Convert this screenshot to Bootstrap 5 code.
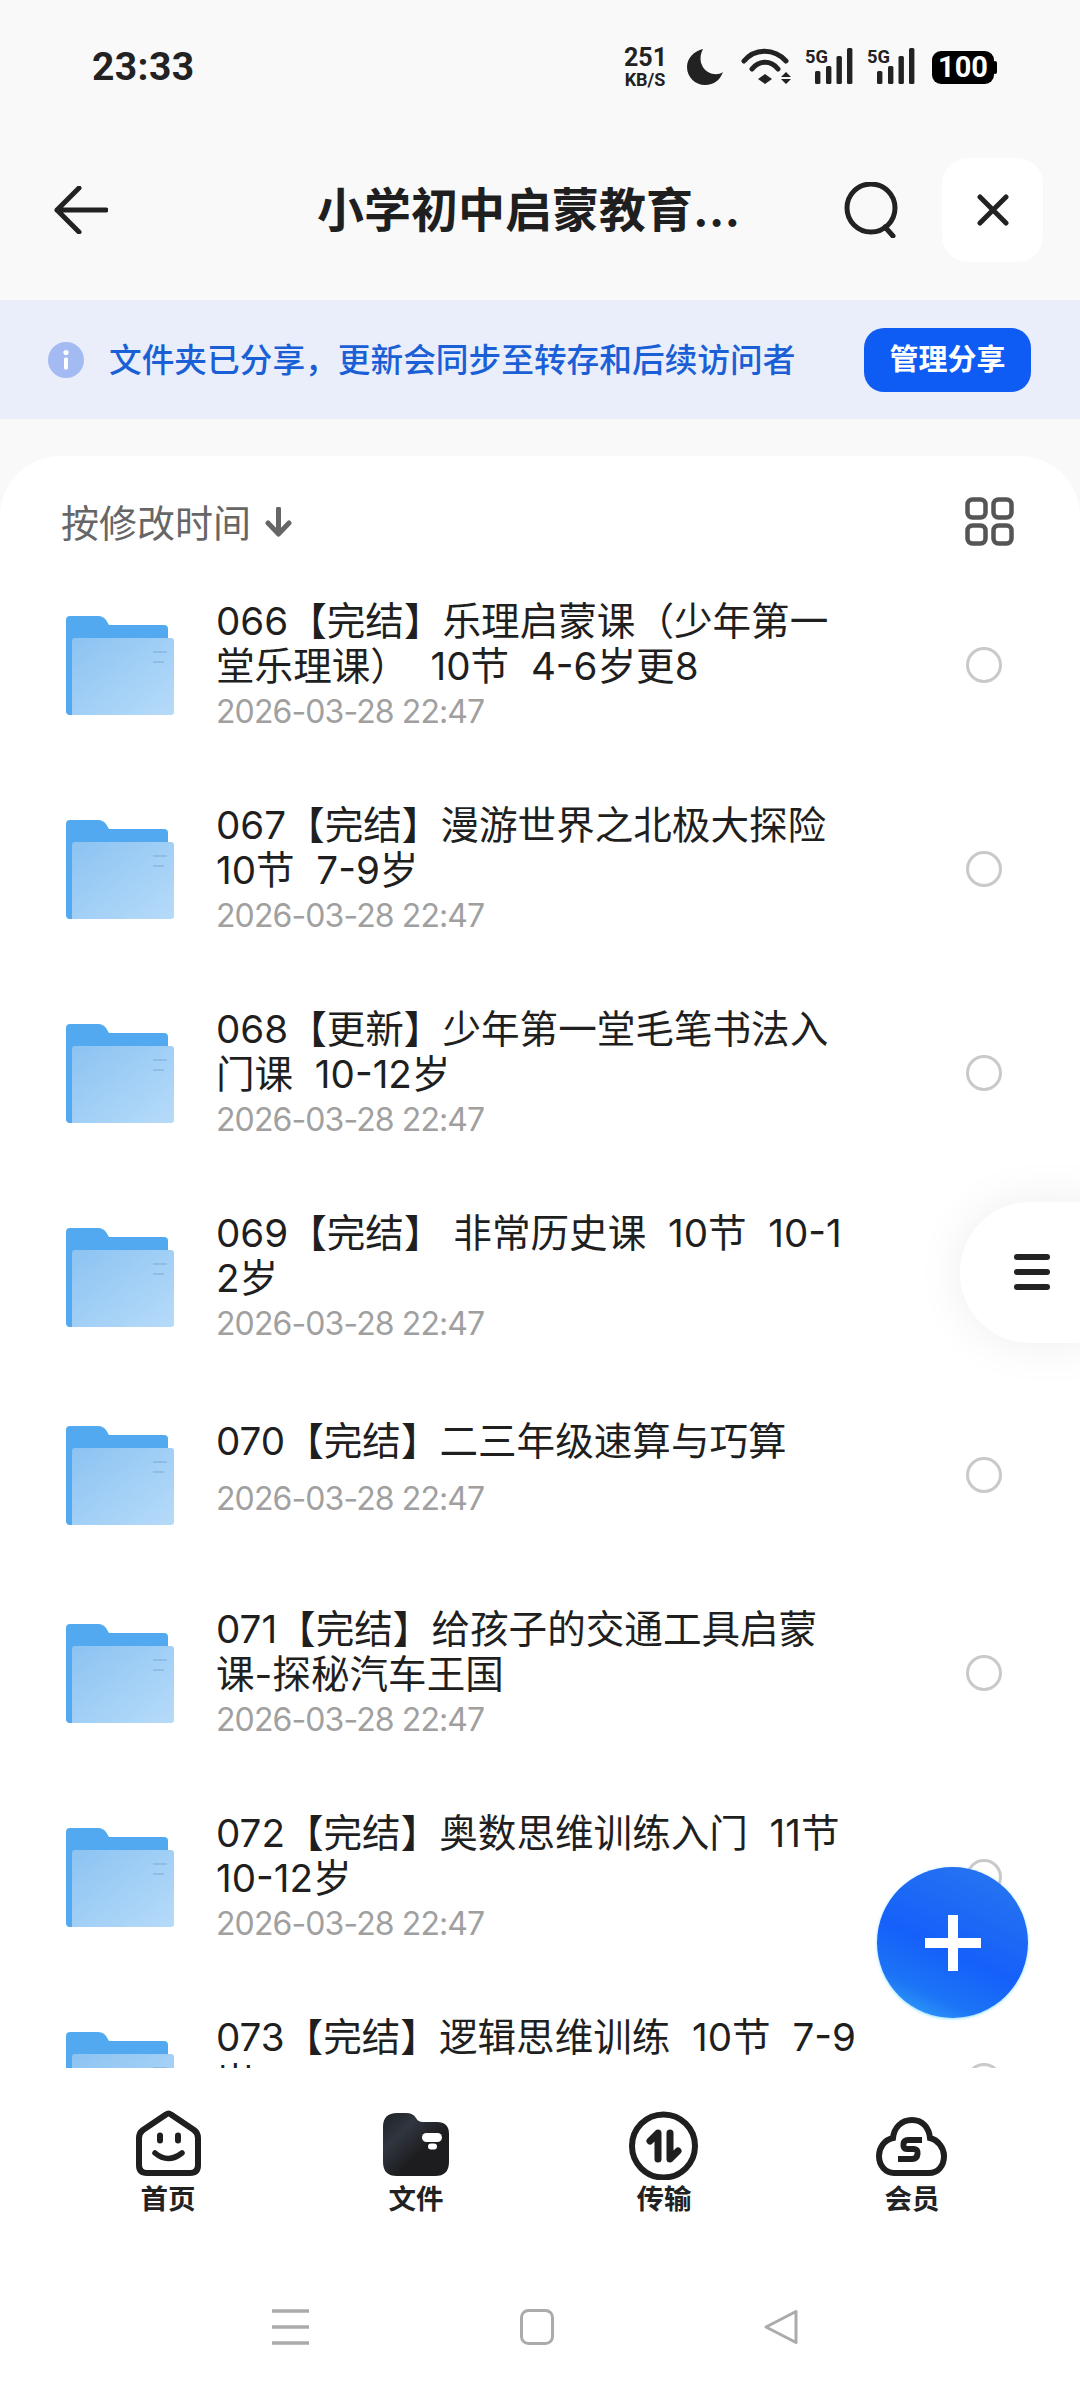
<!DOCTYPE html>
<html lang="zh">
<head>
  <meta charset="UTF-8" />
  <meta name="viewport" content="width=device-width, initial-scale=1.0"/>
  <title>小学初中启蒙教育</title>
  <link href="https://cdn.jsdelivr.net/npm/bootstrap@5.3.0/dist/css/bootstrap.min.css" rel="stylesheet" />
  <style>
    html, body { margin: 0; background: #f9f9f9; }
    body { font-family: Inter, "Noto Sans CJK SC", sans-serif; color: #1f1f1f; }
    .phone { width: 1080px; height: 2392px; overflow: hidden; position: relative; }

    .status-bar { height: 120px; padding: 48px 83px 0 92px; }
    .clock { font-family: Roboto, sans-serif; font-size: 39px; font-weight: 700; line-height: 37px; margin-top: 1px; color: #222; letter-spacing: .4px; }
    .speed { width: 43px; color: #222; font-family: Roboto, sans-serif; font-weight: 700; text-align: center; }
    .speed-num { font-size: 25px; line-height: 20px; }
    .speed-unit { font-size: 18px; line-height: 17px; margin-top: 3px; margin-left: -1px; white-space: nowrap; }
    .moon-icon { margin-left: 19px; }
    .wifi-icon { margin-left: 18px; }
    .signal { width: 48px; height: 37px; margin-left: 14px; }
    .battery { width: 65px; height: 33px; margin: 3px 0 0 17px; }

    .top-bar { height: 180px; padding: 0 37px 0 54px; }
    .top-title { margin-left: 209px; width: 421px; font-size: 47px; font-weight: 700; white-space: nowrap; line-height: 60px; }
    .search-icon { margin-left: 105px; }
    .close-btn { width: 101px; height: 104px; margin-left: 43px; background: #fff; border-radius: 26px; }

    .share-bar { height: 119px; background: #e9eefa; padding: 0 49px 0 48px; }
    .share-text { margin: 3px 0 0 25px; font-size: 32.7px; font-weight: 500; color: #1b5fd6; white-space: nowrap; }
    .share-btn { width: 167px; height: 64px; background: #0f5cf5; color: #fff; border: 0; border-radius: 20px; font-size: 29px; font-weight: 700; padding: 0; line-height: 64px; }

    .sheet { margin-top: 37px; background: #fff; border-radius: 60px 60px 0 0; min-height: 0; }
    .sort-row { height: 107px; padding: 42px 66px 0 61px; flex-shrink: 0; }
    .sort-text { font-size: 38px; color: #666; line-height: 50px; }
    .sort-arrow { margin: 9px 0 0 14px; }
    .grid-icon { margin-top: -1px; }
    .file-list { min-height: 0; overflow: hidden; }
    .file-row { height: 204px; padding: 0 78px 0 66px; }
    .file-row.one-line { height: 192px; }
    .file-row.one-line .file-name { margin-bottom: 12px; }
    .file-row.one-line .file-body { margin-top: -9px; }
    .file-body { margin: 4px 0 0 42px; }
    .file-name { font-size: 38.6px; line-height: 45px; white-space: pre; color: #1f1f1f; }
    .file-date { font-size: 32px; line-height: 46px; color: #a0a0a0; letter-spacing: -.9px; }
    .radio-dot { width: 36px; height: 36px; border: 3px solid #c9c9c9; border-radius: 50%; flex-shrink: 0; }

    .tab-bar { height: 324px; background: #fff; flex-shrink: 0; padding: 42px 44px 0; }
    .tab-label { font-size: 27.5px; font-weight: 700; line-height: 34px; margin-top: 2px; color: #222; }
    .sys-nav { margin-top: 93px; gap: 209px; padding-right: 9px; }
    .sys-menu { margin-right: 2px; }

    .side-tab { position: absolute; left: 960px; top: 1202px; width: 140px; height: 141px; background: #fff; border-radius: 70px 0 0 70px; box-shadow: 0 0 50px rgba(0,0,0,.07); }
    .side-line { display: block; width: 36px; height: 6px; background: #222; border-radius: 3px; margin-bottom: 9px; }
    .side-lines { margin: 52px 0 0 54px; }
    .fab { position: absolute; left: 877px; top: 1867px; width: 151px; height: 151px; border-radius: 50%; background: linear-gradient(205deg, #2a78ee 0%, #1560fa 55%, #1c74f6 78%, #3bb4fb 100%); box-shadow: 0 1px 3px rgba(90,210,255,.7); }
  </style>
</head>
<body>
  <svg width="0" height="0" class="d-block">
    <defs>
      <linearGradient id="folderFront" x1="0" y1="0" x2="1" y2="1">
        <stop offset="0" stop-color="#8cc3f2"/>
        <stop offset="1" stop-color="#b6dbf9"/>
      </linearGradient>
      <linearGradient id="walletFill" x1="0" y1="0" x2="1" y2="1">
        <stop offset="0" stop-color="#1f2227"/>
        <stop offset=".3" stop-color="#30363f"/>
        <stop offset=".6" stop-color="#1d1d1f"/>
      </linearGradient>
      <symbol id="folderIcon" viewBox="0 0 108 99">
        <path d="M4 0H32Q37 0 40 4L43 9H98Q102 9 102 13V40H102V95Q102 99 98 99H4Q0 99 0 95V4Q0 0 4 0Z" fill="#52a9ef"/>
        <path d="M9 22H105Q108 22 108 25V96Q108 99 105 99H6V25Q6 22 9 22Z" fill="url(#folderFront)"/>
        <path d="M87 36H101M87 46H98" stroke="#7fb2e2" stroke-width="2" opacity=".6"/>
      </symbol>
      <symbol id="signalIcon" viewBox="0 0 48 37">
        <text x="0" y="15" font-family="Roboto, sans-serif" font-weight="700" font-size="19" textLength="23" lengthAdjust="spacingAndGlyphs" fill="#222">5G</text>
        <rect x="10" y="23" width="5.4" height="13" rx="1.5" fill="#222"/>
        <rect x="21" y="18" width="5.4" height="18" rx="1.5" fill="#222"/>
        <rect x="31.5" y="8" width="5.4" height="28" rx="1.5" fill="#222"/>
        <rect x="42" y="0" width="5.4" height="36" rx="1.5" fill="#222"/>
      </symbol>
    </defs>
  </svg>

  <div class="phone d-flex flex-column">
    <div class="status-bar d-flex align-items-start flex-shrink-0">
      <div class="clock">23:33</div>
      <div class="d-flex align-items-start ms-auto">
        <div class="speed">
          <div class="speed-num">251</div>
          <div class="speed-unit">KB/S</div>
        </div>
        <svg class="moon-icon" width="37" height="37" viewBox="0 0 37 37">
          <path d="M17 1C8 3 1 10 1 19C1 29 9 37 19 37C28 37 34 32 37 24C33 27 27 27 22 24C15 20 12 10 17 1Z" fill="#222"/>
        </svg>
        <svg class="wifi-icon" width="50" height="37" viewBox="0 0 50 37">
          <path d="M3 13C14 0 33 0 45 13" fill="none" stroke="#222" stroke-width="5" stroke-linecap="round"/>
          <path d="M11 21C18 12 30 12 37 21" fill="none" stroke="#222" stroke-width="5" stroke-linecap="round"/>
          <path d="M24 26L31 31L24 36L17 31Z" fill="#222"/>
          <path d="M45 24L50 29H40ZM40 31H50L45 36Z" fill="#222"/>
        </svg>
        <svg class="signal" viewBox="0 0 48 37"><use href="#signalIcon"/></svg>
        <svg class="signal" viewBox="0 0 48 37"><use href="#signalIcon"/></svg>
        <svg class="battery" viewBox="0 0 65 33">
          <rect x="0" y="0" width="62" height="33" rx="9" fill="#000"/>
          <rect x="61" y="10" width="4" height="13" rx="2" fill="#000"/>
          <text x="31" y="26" text-anchor="middle" font-family="Roboto, sans-serif" font-weight="700" font-size="29" fill="#fff">100</text>
        </svg>
      </div>
    </div>

    <div class="top-bar d-flex align-items-center flex-shrink-0">
      <svg width="54" height="48" viewBox="0 0 54 48">
        <path d="M25 2L3 24L25 46M3 24H52" fill="none" stroke="#222" stroke-width="5" stroke-linecap="round" stroke-linejoin="round"/>
      </svg>
      <div class="top-title">小学初中启蒙教育...</div>
      <svg class="search-icon" width="56" height="56" viewBox="0 0 56 56">
        <circle cx="28" cy="26" r="24" fill="none" stroke="#222" stroke-width="5"/>
        <path d="M42 45L50 54" stroke="#222" stroke-width="5" stroke-linecap="round"/>
      </svg>
      <div class="close-btn d-flex align-items-center justify-content-center">
        <svg width="32" height="32" viewBox="0 0 32 32">
          <path d="M3 3L29 29M29 3L3 29" stroke="#222" stroke-width="5" stroke-linecap="round"/>
        </svg>
      </div>
    </div>

    <div class="share-bar d-flex align-items-center flex-shrink-0">
      <svg width="36" height="36" viewBox="0 0 36 36">
        <circle cx="18" cy="18" r="18" fill="#a3baf2"/>
        <circle cx="18" cy="10.5" r="2.6" fill="#fff"/>
        <rect x="16" y="15.5" width="4" height="12" rx="1.5" fill="#fff"/>
      </svg>
      <div class="share-text">文件夹已分享，更新会同步至转存和后续访问者</div>
      <button type="button" class="share-btn ms-auto">管理分享</button>
    </div>

    <div class="sheet flex-grow-1 d-flex flex-column">
      <div class="sort-row d-flex align-items-start flex-shrink-0">
        <span class="sort-text">按修改时间</span>
        <svg class="sort-arrow" width="27" height="30" viewBox="0 0 27 30">
          <path d="M13.5 2V26M3 16L13.5 27L24 16" fill="none" stroke="#666" stroke-width="5" stroke-linejoin="round" stroke-linecap="round"/>
        </svg>
        <svg class="grid-icon ms-auto" width="49" height="49" viewBox="0 0 49 49">
          <g fill="none" stroke="#555" stroke-width="4.5">
            <rect x="2.5" y="2.5" width="18" height="18" rx="5"/>
            <rect x="28.5" y="2.5" width="18" height="18" rx="5"/>
            <rect x="2.5" y="28.5" width="18" height="18" rx="5"/>
            <rect x="28.5" y="28.5" width="18" height="18" rx="5"/>
          </g>
        </svg>
      </div>

      <div class="file-list flex-grow-1" id="fileList"></div>

      <div class="tab-bar">
        <div class="row g-0 text-center">
          <div class="col-3">
            <svg width="72" height="70" viewBox="0 0 72 70">
              <path d="M34 4.5Q36.500 2.500 39 4.500L62 20Q66 23 66 28V55Q66 63 58 63H15Q7 63 7 55V28Q7 23 11 20Z" fill="none" stroke="#1f1f1f" stroke-width="6" stroke-linejoin="round"/>
              <path d="M28 25.500V30.500M46 25.500V30.500" stroke="#1f1f1f" stroke-width="6" stroke-linecap="round"/>
              <path d="M23 43Q36 54 50 43" fill="none" stroke="#1f1f1f" stroke-width="5.500" stroke-linecap="round"/>
            </svg>
            <div class="tab-label">首页</div>
          </div>
          <div class="col-3">
            <svg width="72" height="70" viewBox="0 0 72 70">
              <path d="M3 17Q3 3 17 3H26Q33 3 36 8Q38 12 43 12H57Q69 12 69 24V52Q69 66 55 66H17Q3 66 3 52Z" fill="url(#walletFill)"/>
              <rect x="42" y="23" width="20" height="9" rx="4.500" fill="#fff"/>
              <rect x="48" y="33.500" width="9" height="6" rx="3" fill="#fff"/>
            </svg>
            <div class="tab-label">文件</div>
          </div>
          <div class="col-3">
            <svg width="72" height="70" viewBox="0 0 72 70">
              <circle cx="35.500" cy="36" r="31.500" fill="none" stroke="#1f1f1f" stroke-width="6"/>
              <path d="M30 49V23L22 31M42 23V49L50 41" fill="none" stroke="#1f1f1f" stroke-width="7" stroke-linecap="round" stroke-linejoin="round"/>
            </svg>
            <div class="tab-label">传输</div>
          </div>
          <div class="col-3">
            <svg width="72" height="70" viewBox="0 0 72 70">
              <path d="M36 10C25 10 18 18 17 28C8 30 3 38 3 46C3 56 10 63 18 63H53C62 63 68 56 68 46C68 38 62 30 54 28C53 18 47 10 36 10Z" fill="none" stroke="#1f1f1f" stroke-width="6"/>
              <path d="M46 30H32Q28 30 27.500 34Q27 39 31 39H38Q42 39 41.500 44Q41 49 36 49H22" fill="none" stroke="#1f1f1f" stroke-width="6"/>
            </svg>
            <div class="tab-label">会员</div>
          </div>
        </div>
        <div class="sys-nav d-flex justify-content-center">
          <svg class="sys-menu" width="37" height="36" viewBox="0 0 37 36">
            <path d="M0 2H37M0 18H37M0 34H37" stroke="#ababab" stroke-width="3.6"/>
          </svg>
          <svg width="34" height="36" viewBox="0 0 34 36">
            <rect x="1.500" y="1.500" width="31" height="33" rx="7" fill="none" stroke="#ababab" stroke-width="3"/>
          </svg>
          <svg width="36" height="36" viewBox="0 0 36 36">
            <path d="M33 2.500V33.500L3 18Z" fill="none" stroke="#ababab" stroke-width="3" stroke-linejoin="round"/>
          </svg>
        </div>
      </div>
    </div>

    <div class="side-tab">
      <div class="side-lines">
        <span class="side-line"></span>
        <span class="side-line"></span>
        <span class="side-line"></span>
      </div>
    </div>

    <div class="fab d-flex align-items-center justify-content-center">
      <svg width="58" height="58" viewBox="0 0 58 58">
        <path d="M29 1V57M1 29H57" stroke="#fff" stroke-width="10"/>
      </svg>
    </div>
  </div>

  <script src="https://cdn.jsdelivr.net/npm/bootstrap@5.3.0/dist/js/bootstrap.bundle.min.js"></script>
  <script>
    const files = [
      '066【完结】乐理启蒙课（少年第一\n堂乐理课）  10节  4-6岁更8',
      '067【完结】漫游世界之北极大探险\n10节  7-9岁',
      '068【更新】少年第一堂毛笔书法入\n门课  10-12岁',
      '069【完结】 非常历史课  10节  10-1\n2岁',
      '070【完结】二三年级速算与巧算',
      '071【完结】给孩子的交通工具启蒙\n课-探秘汽车王国',
      '072【完结】奥数思维训练入门  11节\n10-12岁',
      '073【完结】逻辑思维训练  10节  7-9\n岁'
    ];

    const fileList = document.getElementById('fileList');
    files.forEach((name) => {
      const row = document.createElement('div');
      row.className = 'file-row d-flex align-items-center' + (name.includes('\n') ? '' : ' one-line');
      row.innerHTML = `
        <svg width="108" height="99" class="flex-shrink-0"><use href="#folderIcon"/></svg>
        <div class="file-body">
          <div class="file-name"></div>
          <div class="file-date">2026-03-28 22:47</div>
        </div>
        <div class="radio-dot ms-auto"></div>`;
      row.querySelector('.file-name').textContent = name;
      fileList.appendChild(row);
    });
  </script>
</body>
</html>
